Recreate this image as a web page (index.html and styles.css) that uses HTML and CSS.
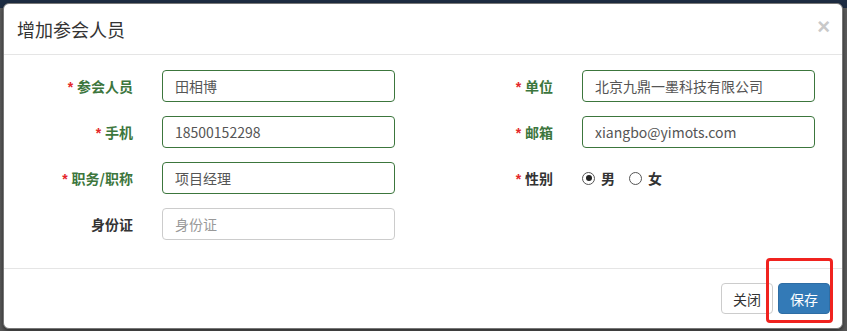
FILE: index.html
```html
<!DOCTYPE html>
<html lang="zh-CN">
<head>
    <meta charset="UTF-8">
    <title>增加参会人员</title>
    <link rel="stylesheet" href="styles.css">
</head>
<body>
    <div class="backdrop">
        <div class="modal">
            <div class="modal-header">
                <h4 class="modal-title">增加参会人员</h4>
                <span class="modal-close">&times;</span>
            </div>

            <div class="modal-body">
                <div class="form-grid">
                    <div class="form-group">
                        <label class="req ok">参会人员</label>
                        <input class="field ok" type="text" value="田相博">
                    </div>
                    <div class="form-group">
                        <label class="req ok">单位</label>
                        <input class="field ok" type="text" value="北京九鼎一墨科技有限公司">
                    </div>
                    <div class="form-group">
                        <label class="req ok">手机</label>
                        <input class="field ok" type="text" value="18500152298">
                    </div>
                    <div class="form-group">
                        <label class="req ok">邮箱</label>
                        <input class="field ok" type="text" value="xiangbo@yimots.com">
                    </div>
                    <div class="form-group">
                        <label class="req ok">职务/职称</label>
                        <input class="field ok" type="text" value="项目经理">
                    </div>
                    <div class="form-group">
                        <label class="req">性别</label>
                        <div class="radios">
                            <span class="radio checked"></span><span class="radio-text">男</span>
                            <span class="radio"></span><span class="radio-text">女</span>
                        </div>
                    </div>
                    <div class="form-group">
                        <label>身份证</label>
                        <input class="field" type="text" placeholder="身份证">
                    </div>
                </div>
            </div>

            <div class="modal-footer">
                <button class="btn btn-default">关闭</button>
                <span class="highlight">
                    <button class="btn btn-primary">保存</button>
                </span>
            </div>
        </div>
    </div>
</body>
</html>
```

FILE: styles.css
```css
body, html {
    margin: 0;
    padding: 0;
    height: 100%;
    overflow: hidden;
    font-family: 'Noto Sans CJK SC', 'Noto Sans', sans-serif;
    font-size: 14px;
    color: #333;
}

.backdrop {
    height: 100%;
    padding: 3px 4px 0 3px;
    box-sizing: border-box;
    background: linear-gradient(to bottom, #1d2c42 0, #1d2c42 8px, #5c5c5c 8px, #585858 100%);
}

.modal {
    position: relative;
    background-color: white;
    border: 1px solid #777;
    border-radius: 6px;
    box-shadow: 0 2px 4px rgba(0, 0, 0, 0.5);
}

.modal-header {
    height: 50px;
    padding: 0 13px;
    border-bottom: 1px solid #e5e5e5;
    display: flex;
    align-items: center;
}

.modal-title {
    margin: 0;
    font-size: 18px;
    font-weight: normal;
    color: #333;
}

.modal-close {
    position: absolute;
    top: 10px;
    right: 12px;
    font-family: 'Liberation Sans', sans-serif;
    font-size: 22px;
    font-weight: bold;
    color: #c9c9c9;
}

.modal-body {
    padding: 15px 0 14px 9px;
    border-bottom: 1px solid #e5e5e5;
}

.form-grid {
    display: grid;
    grid-template-columns: 420px 420px;
}

.form-group {
    display: flex;
    align-items: center;
    height: 32px;
    margin-bottom: 14px;
}

.form-group label {
    width: 120px;
    margin-right: 29px;
    text-align: right;
    font-weight: bold;
    color: #333;
}

.form-group label.ok {
    color: #3c763d;
}

.form-group label.req::before {
    content: '* ';
    color: #e4262a;
    font-family: 'Liberation Sans', sans-serif;
}

.field {
    width: 233px;
    height: 32px;
    box-sizing: border-box;
    padding: 0 12px;
    border: 1px solid #ccc;
    border-radius: 4px;
    font-family: 'Noto Sans CJK SC', 'Noto Sans', sans-serif;
    font-size: 14px;
    color: #555;
    outline: none;
}

.field.ok {
    border-color: #3c763d;
}

.field::placeholder {
    color: #999;
}

.radios {
    display: flex;
    align-items: center;
}

.radio {
    width: 11px;
    height: 11px;
    border: 1px solid #555;
    border-radius: 50%;
    position: relative;
    margin-right: 6px;
}

.radio.checked::after {
    content: '';
    position: absolute;
    left: 2.5px;
    top: 2.5px;
    width: 6px;
    height: 6px;
    border-radius: 50%;
    background-color: #222;
}

.radio-text {
    font-weight: bold;
    margin-right: 14px;
}

.modal-footer {
    padding: 14px 12px 14px 0;
    display: flex;
    justify-content: flex-end;
    align-items: center;
}

.btn {
    height: 31px;
    padding: 0 11px;
    border-radius: 4px;
    font-family: 'Noto Sans CJK SC', 'Noto Sans', sans-serif;
    font-size: 14px;
    cursor: pointer;
}

.btn-default {
    background-color: white;
    border: 1px solid #ccc;
    color: #333;
}

.btn-primary {
    background-color: #337ab7;
    border: 1px solid #2e6da4;
    color: white;
}

.highlight {
    margin-left: 5px;
    position: relative;
}

.highlight::after {
    content: '';
    position: absolute;
    left: -12px;
    right: -3px;
    top: -25px;
    bottom: -9px;
    border: 3px solid #f0231f;
    border-radius: 4px;
}
```
